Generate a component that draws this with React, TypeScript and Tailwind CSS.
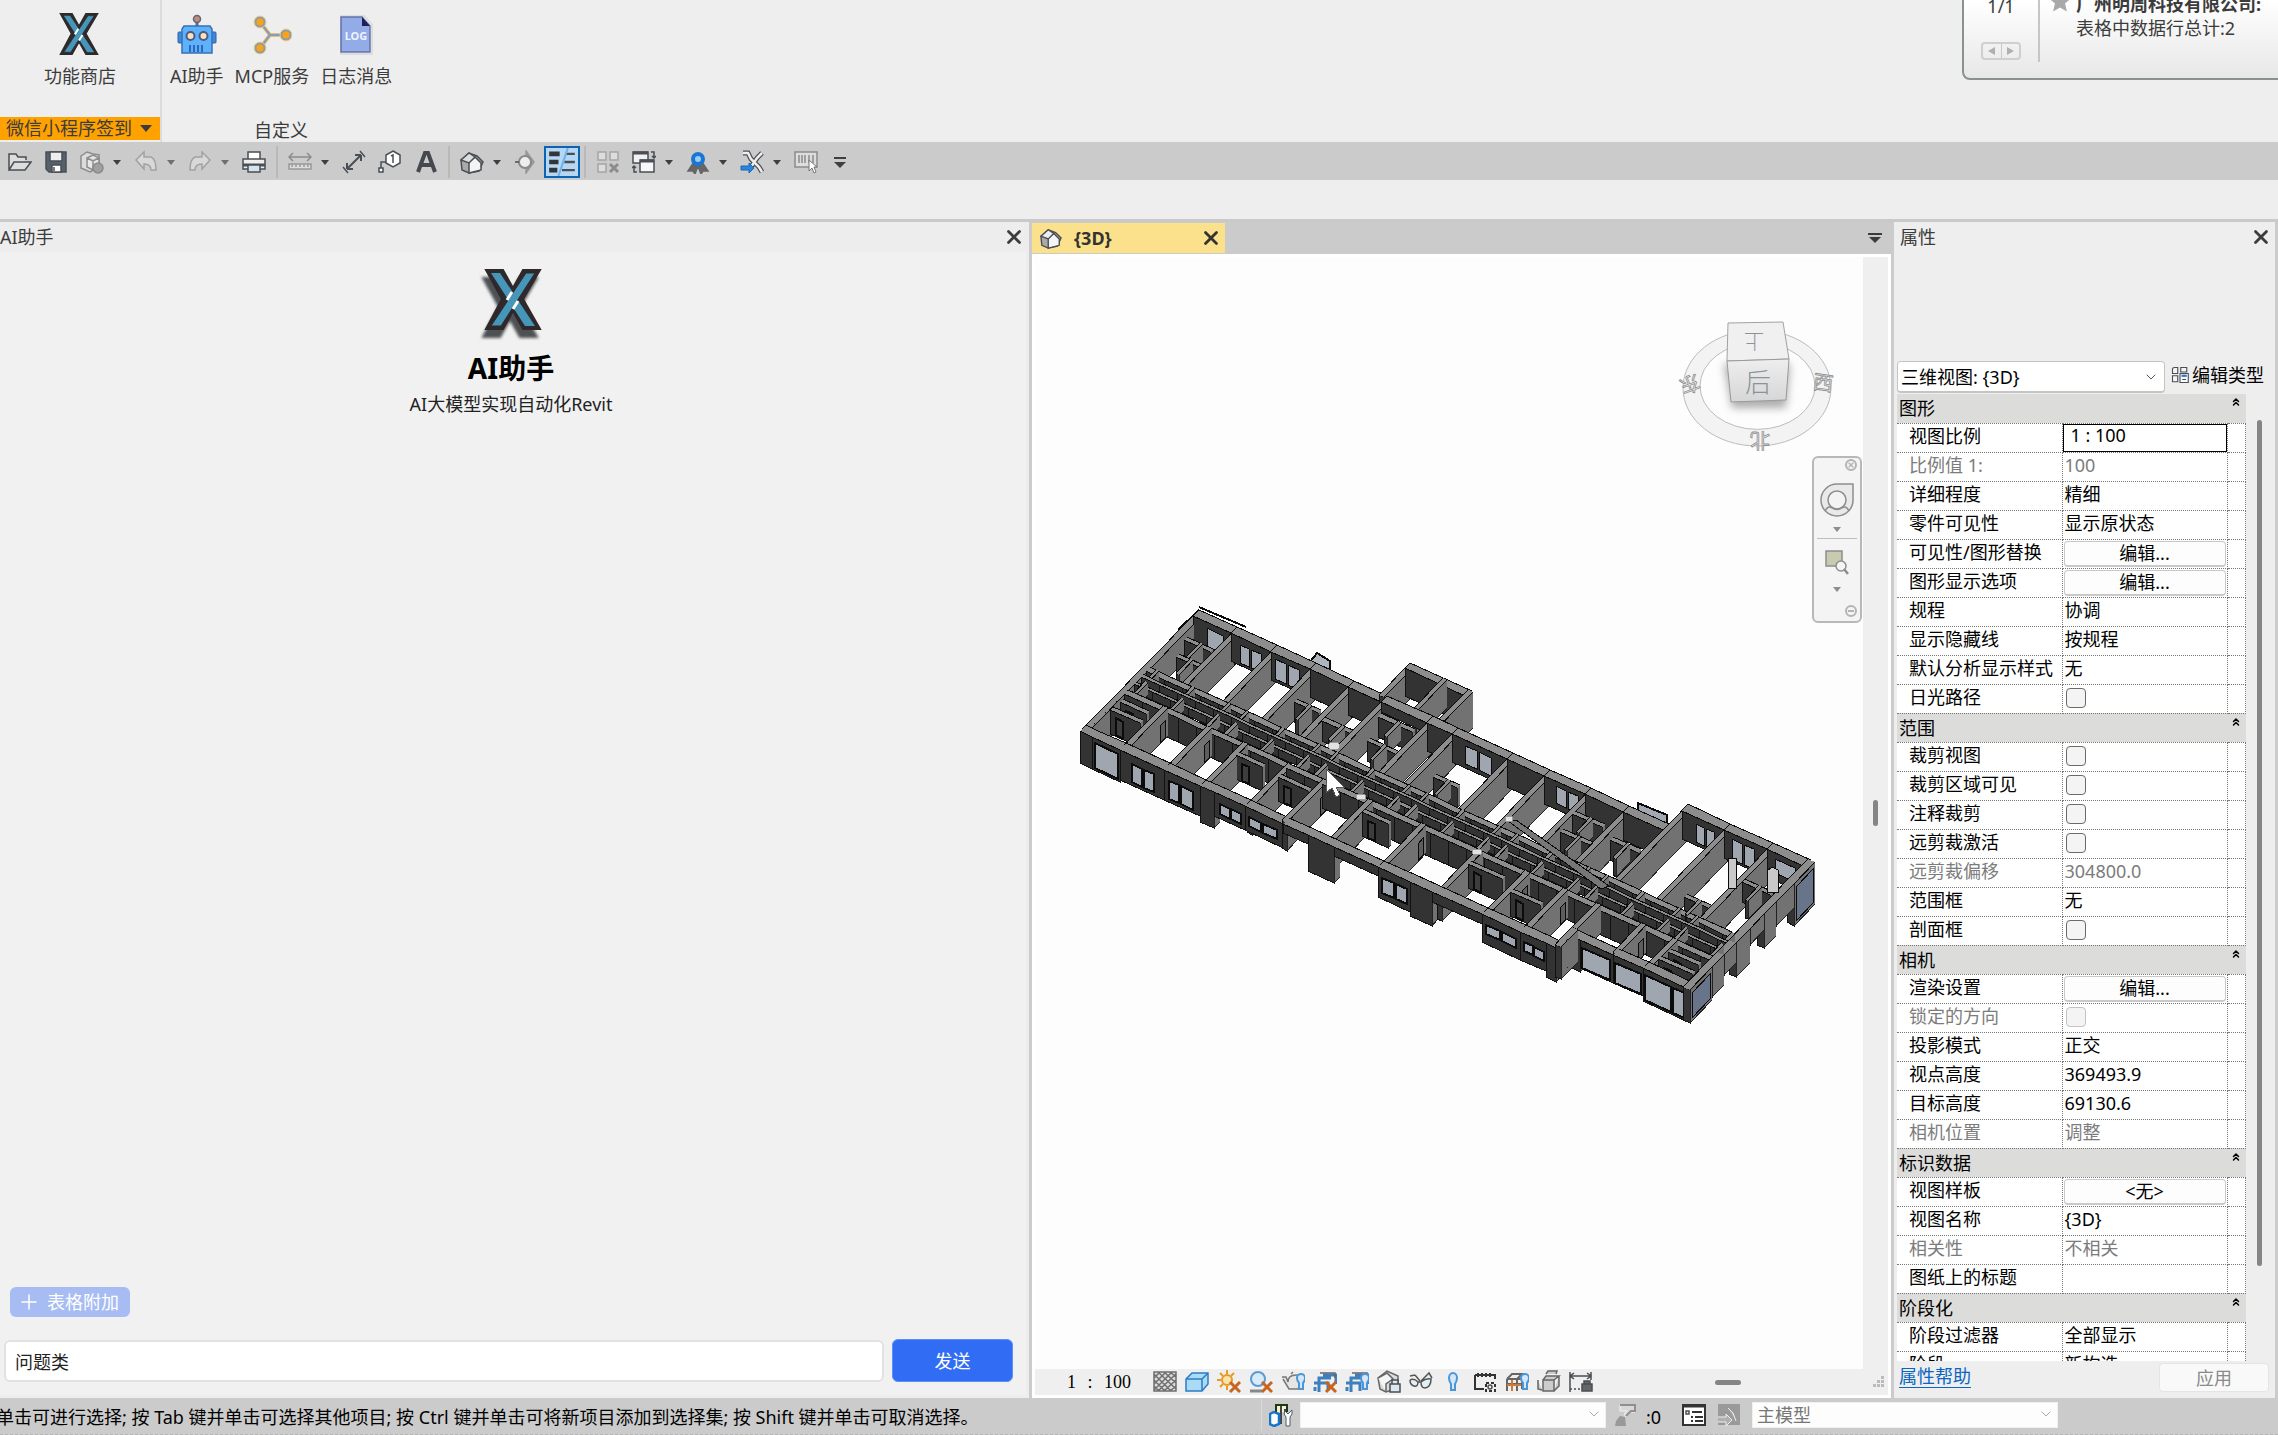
import type { ReactNode } from "react";
import { ChevronDown, ChevronsUp, Plus, X } from "lucide-react";

const FONT = "font-['Noto_Sans','Noto_Sans_CJK_SC',sans-serif]";

/* ---------- shared bits ---------- */

function Icon({ children, className = "h-6 w-6" }: { children: ReactNode; className?: string }) {
  return (
    <svg viewBox="0 0 24 24" className={className} fill="none" stroke="#4a4f55" strokeWidth="1.5" aria-hidden>
      {children}
    </svg>
  );
}

function Caret({ color = "#3c4043" }: { color?: string }) {
  return (
    <svg viewBox="0 0 8 5" className="h-[5px] w-2" aria-hidden>
      <path d="M0 0h8L4 5z" fill={color} />
    </svg>
  );
}

function LogoX({ className, shadow }: { className: string; shadow?: boolean }) {
  const outline = "M2 2H19L29 20 39 2H56L39 31 56 61H39L29 43 19 61H2L18 31Z";
  return (
    <svg viewBox={shadow ? "-5 0 64 74" : "0 0 58 63"} className={className} aria-hidden>
      {shadow && (
        <>
          <filter id="soft" x="-20%" y="-20%" width="140%" height="140%">
            <feGaussianBlur stdDeviation="1.5" />
          </filter>
          <path d={outline} fill="#4d5152" stroke="#4d5152" strokeWidth="2" transform="translate(-3 8)" filter="url(#soft)" />
        </>
      )}
      <path d={outline} fill="#2f292c" stroke="#2f292c" strokeWidth="2" />
      <path d="M7 5H16L51 58H41Z" fill="#4596b8" />
      <path d="M42 5H51L17 58H7Z" fill="#4596b8" stroke="#2f292c" strokeWidth="1" />
      <path d="M28 24 23 32M34 33 29 41" stroke="#fff" strokeWidth="3" />
    </svg>
  );
}

/* ---------- ribbon ---------- */

function RobotIcon() {
  return (
    <svg viewBox="0 0 40 42" className="h-[42px] w-10" aria-hidden>
      <path d="M20 8v5" stroke="#5b6b8c" strokeWidth="3" />
      <circle cx="20" cy="5" r="3.5" fill="#c98b6b" stroke="#56678a" strokeWidth="1.5" />
      <rect x="1" y="18" width="5" height="11" rx="1" fill="#3c8ae0" stroke="#3a5f9c" />
      <rect x="34" y="18" width="5" height="11" rx="1" fill="#3c8ae0" stroke="#3a5f9c" />
      <path d="M7 12h26l2 3v24H5V15z" fill="#5cb3fb" stroke="#3a6fb5" strokeWidth="1.5" />
      <circle cx="13.500" cy="22" r="4" fill="#fbe1b6" stroke="#4b5a86" strokeWidth="2" />
      <circle cx="26.500" cy="22" r="4" fill="#fbe1b6" stroke="#4b5a86" strokeWidth="2" />
      <path d="M13 31v7M17 31v7M21 31v7M25 31v7" stroke="#2f68b8" strokeWidth="2" />
    </svg>
  );
}

function McpIcon() {
  return (
    <svg viewBox="0 0 40 42" className="h-[42px] w-10" aria-hidden>
      <path d="M8 8 18 21H33M18 21 8 34" fill="none" stroke="#f0cf7a" strokeWidth="4" />
      <path d="M8 8 18 21H33M18 21 8 34" fill="none" stroke="#8f9cb0" strokeWidth="2.500" />
      {[[8, 8], [34, 21], [8, 34]].map(([cx, cy]) => (
        <g key={cy}>
          <circle cx={cx} cy={cy} r="6" fill="#8f9cb0" stroke="#f0cf7a" />
          <circle cx={cx} cy={cy} r="3.500" fill="#fca311" />
        </g>
      ))}
    </svg>
  );
}

function LogIcon() {
  return (
    <svg viewBox="0 0 40 42" className="h-[42px] w-10" aria-hidden>
      <path d="M5 2h23l8 9v29H5z" fill="#fff" stroke="#ddd" strokeWidth="2" />
      <path d="M5 3h21l8 9v26H5z" fill="#93abe6" stroke="#6673a8" strokeWidth="1.500" />
      <path d="M26 3l8 9h-8z" fill="#1e1f56" />
      <text x="20" y="26" textAnchor="middle" fontSize="11" fontWeight="700" fill="#eef3ff" fontFamily="Noto Sans">
        LOG
      </text>
    </svg>
  );
}

function RibbonButton({ label, children }: { label: string; children: ReactNode }) {
  return (
    <button type="button" className="flex flex-col items-center gap-2 whitespace-nowrap">
      {children}
      <span className="leading-6">{label}</span>
    </button>
  );
}

function Notice() {
  return (
    <aside className="ml-auto flex h-20 w-[316px] shrink-0 overflow-hidden rounded-bl-lg border-b-2 border-l-2 border-[#8b9090] bg-gradient-to-b from-white to-[#e7e7e7]">
      <div className="flex w-[74px] flex-col items-center justify-between pb-[18px]">
        <span className="-mt-1.5 leading-6">1/1</span>
        <div className="flex h-[18px] w-10 divide-x divide-[#c8c8c8] rounded-sm border-2 border-[#cfcfcf]">
          <button type="button" aria-label="上一条" className="flex flex-1 items-center justify-center">
            <svg viewBox="0 0 7 8" className="h-2 w-[7px]"><path d="M7 0v8L0 4z" fill="#b0b0b0" /></svg>
          </button>
          <button type="button" aria-label="下一条" className="flex flex-1 items-center justify-center">
            <svg viewBox="0 0 7 8" className="h-2 w-[7px]"><path d="M0 0v8l7-4z" fill="#b0b0b0" /></svg>
          </button>
        </div>
      </div>
      <div className="h-[62px] w-0.5 bg-[#c6c6c6]" />
      <svg viewBox="0 0 24 24" className="-mt-2.5 ml-2 h-[22px] w-6 shrink-0" aria-hidden>
        <path d="M12 0l3.500 8.500 8.500.6-6.500 5.700 2 8.700L12 19l-7.500 4.500 2-8.700L0 9.100l8.500-.6z" fill="#a9a9a9" />
      </svg>
      <div className="-mt-2 ml-1 whitespace-nowrap leading-6">
        <p className="font-bold">广州明周科技有限公司:</p>
        <p>表格中数据行总计:2</p>
      </div>
    </aside>
  );
}

function Ribbon() {
  return (
    <header className="flex h-[142px] shrink-0 overflow-hidden bg-[#eee]">
      <div className="flex w-[162px] shrink-0 flex-col items-center justify-between border-r-2 border-[#dcdcdc] pt-3">
        <RibbonButton label="功能商店">
          <LogoX className="mr-0.5 h-[44px] w-10" />
        </RibbonButton>
        <button type="button" className="mb-0.5 flex h-[23px] w-full items-center gap-2 bg-[#ffa200] pl-1.5 leading-[23px]">
          微信小程序签到
          <svg viewBox="0 0 12 7" className="h-[7px] w-3" aria-hidden><path d="M0 0h12L6 7z" fill="#3c3c3c" /></svg>
        </button>
      </div>
      <div className="flex flex-col items-center justify-between px-2 pt-[14px]">
        <div className="flex gap-[11px]">
          <RibbonButton label="AI助手"><RobotIcon /></RibbonButton>
          <RibbonButton label="MCP服务"><McpIcon /></RibbonButton>
          <RibbonButton label="日志消息"><LogIcon /></RibbonButton>
        </div>
        <span className="leading-6">自定义</span>
      </div>
      <Notice />
    </header>
  );
}

/* ---------- quick access toolbar ---------- */

type Tool = { name: string; icon?: ReactNode; menu?: boolean; dim?: boolean; on?: boolean; sep?: boolean };

const TOOLS: Tool[] = [
  { name: "打开", icon: <Icon><path d="M1 20V4h7l2 3h8v3M1 20l5-8h17l-6 8z" fill="#ddd" /></Icon> },
  { name: "保存", icon: <Icon><path d="M2 2h20v20H5l-3-3z" fill="#56616b" /><path d="M6 2h12v9H6z" fill="#eee" /><path d="M8 15h9v7H8z" fill="#fff" /><path d="M10 17v4" /></Icon> },
  { name: "同步", menu: true, icon: <Icon><path d="M1 6l6-4 6 2 6 1v12l-9 5-9-4z" fill="#dcdcdc" stroke="#8c8c8c" /><path d="M7 8l6-3 6 3v9l-6 3-6-3zM7 8l6 3 6-3M13 11v9" fill="#e8e8e8" stroke="#8c8c8c" /><circle cx="18" cy="18" r="5" fill="#a0a0a0" stroke="#8a8a8a" /></Icon> },
  { name: "放弃", menu: true, dim: true, icon: <Icon><path d="M2 10l8-8v5h7q5 2 5 13h-5q0-6-7-6v5z" fill="#d8d8d8" stroke="#a2a2a2" /></Icon> },
  { name: "重做", menu: true, dim: true, icon: <Icon><path d="M22 10l-8-8v5H7q-5 2-5 13h5q0-6 7-6v5z" fill="#d8d8d8" stroke="#a2a2a2" /></Icon> },
  { name: "打印", icon: <Icon><path d="M6 9V2h12v7" fill="#fff" /><path d="M1 9h22v10H1z" fill="#eee" /><path d="M1 15h22" strokeWidth="3" /><path d="M6 15h12v7H6z" fill="#d5e4ec" /></Icon> },
  { name: "", sep: true },
  { name: "测量", menu: true, icon: <Icon><path d="M1 7h22M5 3L1 7l4 4M19 3l4 4-4 4" stroke="#8c8c8c" /><path d="M1 14h22v5H1zM4 14v3M8 14v3M12 14v3M16 14v3M20 14v3" stroke="#999" fill="#ddd" /></Icon> },
  { name: "对齐尺寸标注", icon: <Icon><path d="M5 19L19 5M19 5v6M19 5h-6M5 19v-6M5 19h6" strokeWidth="2" /><path d="M1 17l5 6M18 1l5 6" /></Icon> },
  { name: "按类别标记", icon: <Icon><path d="M3 18v-6h6" /><path d="M1 18h4v4H1z" fill="#fff" /><path d="M15 1l7 4v8l-7 4-7-4V5z" fill="#fff" /><path d="M13 6l2-1v8" /></Icon> },
  { name: "文字", icon: <Icon><path d="M4 22L11 3h3l7 19M8 15h9" strokeWidth="4" stroke="#45494d" /></Icon> },
  { name: "", sep: true },
  { name: "默认三维视图", menu: true, icon: <Icon><path d="M1 10l8-7 8 3 6 6-4 9-10 2-7-3z" fill="#aaa" /><path d="M9 23V12l6-5 6 6v7z" fill="#f4f4f4" /><path d="M1 10l8-7 6 4-6 6z" fill="#ddd" /></Icon> },
  { name: "剖面", icon: <Icon><path d="M12 1l8 11-8 11z" fill="#999" stroke="#999" /><circle cx="11" cy="12" r="6" fill="#eee" stroke="#8a8a8a" strokeWidth="2" /><path d="M1 12h4" /></Icon> },
  { name: "细线", on: true, icon: <Icon className="h-7 w-7"><path d="M1 5h9M1 12h8M1 19h7" stroke="#30353a" strokeWidth="4" /><path d="M15 5h8M14 12h9M12 19h11" strokeWidth="2" /><path d="M17 0L9 24" stroke="#6fb0f0" strokeWidth="1.800" /></Icon> },
  { name: "", sep: true },
  { name: "关闭非活动视图", dim: true, icon: <Icon><path d="M2 2h8v8H2zM14 2h8v8h-8zM2 14h8v8H2z" fill="#ddd" stroke="#a5a5a5" /><path d="M14 14l8 8M22 14l-8 8" stroke="#8c8c8c" strokeWidth="3" /></Icon> },
  { name: "切换窗口", menu: true, icon: <Icon><path d="M1 2h15v11H1z" fill="#f1f1f1" /><path d="M8 10h14v12H8z" fill="#f7f7f7" /><path d="M1 3h15M8 11h14" strokeWidth="3" /><path d="M19 2h3v6M20 6l2 2 2-2M5 22H2v-6M0 18l2-2 2 2" /></Icon> },
  { name: "徽章", menu: true, icon: <Icon><path d="M8 12l-6 9h5l2 3 3-8 3 8 2-3h5l-6-9z" fill="#666" stroke="#666" /><circle cx="12" cy="9" r="5" fill="#9accf7" stroke="#1a76d2" strokeWidth="4" /></Icon> },
  { name: "工具", menu: true, icon: <Icon><path d="M3 3l5 0 3 6 8 8 3 5M22 3l-5 5-6 9" strokeWidth="5" /><path d="M3 3l5 0 3 6 8 8 3 5M22 3l-5 5-6 9" stroke="#eee" strokeWidth="2.500" /><path d="M1 16h8v-3l5 5-5 5v-3H1z" fill="#2787e0" stroke="#1c66b0" strokeWidth="1" /></Icon> },
  { name: "修改", icon: <Icon><path d="M1 2h22v15H1z" fill="#ddd" stroke="#8c8c8c" /><path d="M5 5v8M8 5v8M11 5v8M15 5v8M19 5v8" stroke="#8c8c8c" /><path d="M15 10v11l3-3 2 5 2-1-2-5h3z" fill="#fff" stroke="#777" strokeWidth="1" /></Icon> },
];

function QuickToolbar() {
  return (
    <nav aria-label="快速访问工具栏" className="flex h-[38px] shrink-0 items-center bg-[#cbcbcb] pl-0.5 pt-0.5">
      {TOOLS.map((t, i) =>
        t.sep ? (
          <span key={i} className="mx-1 h-8 w-0.5 bg-[#b9b9b9]" />
        ) : (
          <div key={i} className="flex items-center">
            <button
              type="button"
              aria-label={t.name}
              className={
                t.on
                  ? "flex h-8 w-9 items-center justify-center border-2 border-[#0a64b4] bg-[#b5d7f3]"
                  : "flex h-8 w-9 items-center justify-center"
              }
            >
              {t.icon}
            </button>
            {t.menu && (
              <span className="flex w-[18px] justify-center pr-1">
                <Caret color={t.dim ? "#6f6f6f" : undefined} />
              </span>
            )}
          </div>
        ),
      )}
      <button type="button" aria-label="自定义工具栏" className="ml-2.5 flex flex-col items-center gap-[3px]">
        <span className="h-0.5 w-3 bg-[#3c4043]" />
        <svg viewBox="0 0 12 6" className="h-1.5 w-3" aria-hidden><path d="M0 0h12L6 6z" fill="#3c4043" /></svg>
      </button>
    </nav>
  );
}

/* ---------- AI panel ---------- */

function AiPanel() {
  return (
    <section className="flex min-w-0 flex-[1029] flex-col bg-[#ededed] pb-[3px]">
      <div className="flex h-[30px] shrink-0 items-center justify-between pr-1 text-[#3c3c3c]">
        <h2>AI助手</h2>
        <button type="button" aria-label="关闭"><X className="h-[22px] w-[22px]" strokeWidth={3} /></button>
      </div>
      <div className="mr-[3px] flex flex-1 flex-col bg-[#f1f1f1]">
        <div className="flex flex-col items-center pt-4 pr-1">
          <LogoX className="h-[74px] w-16" shadow />
          <h1 className="mt-2 text-[28px] font-bold leading-9 text-black">AI助手</h1>
          <p className="mt-1.5 leading-6 text-[#222]">AI大模型实现自动化Revit</p>
        </div>
        <form className="mt-auto px-1 pb-[13px]" onSubmit={(e) => e.preventDefault()}>
          <button type="button" className="mb-[22px] ml-1.5 flex h-[30px] items-center gap-1.5 rounded-md bg-[#a7bcf3] px-[11px] leading-6 text-white">
            <Plus className="-ml-1 h-6 w-6" strokeWidth={1.5} />
            表格附加
          </button>
          <div className="flex items-center gap-2 pr-[9px]">
            <input
              aria-label="问题"
              defaultValue="问题类"
              className="h-[42px] min-w-0 flex-1 rounded-md border-2 border-[#e2e2e2] bg-white px-[9px] text-[#222] outline-none"
            />
            <button type="submit" className="h-[43px] w-[121px] rounded-md border border-[#5c8df8] bg-[#316df4] text-white">发送</button>
          </div>
        </form>
      </div>
    </section>
  );
}

/* ---------- building model ---------- */

// plan coordinates: a runs along the block, b across it, z is height below the wall head
const pt = (a: number, b: number, z = 0) => `${Math.round(1199 + a - b)},${Math.round(610 + a * 0.455 + b * 1.02 + z)}`;

type Pane = [number, number, number, number];
type Box = { a0: number; a1: number; b0: number; b1: number; h: number; inner?: boolean; front?: Pane[]; side?: Pane[] };

const BACK = [0, 38, 78, 117, 155, 188, 234, 259, 314, 351, 392, 430, 470, 512, 555, 593];
const FRONT = [0, 40, 84, 120, 165, 200, 245, 298, 355, 402, 440, 473, 518, 550, 593];

const boxes: Box[] = [];
const uWall = (a0: number, a1: number, b: number, t: number, h: number, extra: Partial<Box> = {}) =>
  boxes.push({ a0, a1, b0: b, b1: b + t, h, ...extra });
const vWall = (a: number, b0: number, b1: number, t: number, h: number, extra: Partial<Box> = {}) => {
  // cut long partitions so that the back-to-front order stays right
  for (let b = b0; b < b1; b += 11) {
    boxes.push({ a0: a, a1: a + t, b0: b, b1: Math.min(b + 11, b1), h, inner: b + 11 < b1, ...(b === b0 ? extra : {}) });
  }
};

const backWindows: Record<number, Pane[]> = {
  0: [[14, 30, 6, 24]],
  38: [[9, 18, 7, 25], [20, 30, 7, 25]],
  78: [[4, 15, 6, 26], [17, 28, 6, 26]],
  259: [[13, 25, 6, 24], [27, 39, 6, 24]],
  351: [[12, 22, 5, 22], [24, 34, 5, 22]],
  470: [[14, 22, 7, 25], [24, 32, 7, 25]],
  512: [[8, 18, 6, 26], [20, 30, 6, 26]],
  555: [[8, 28, 6, 20]],
};

BACK.slice(0, -1).forEach((a, i) => {
  const next = BACK[i + 1];
  const b = a >= 470 ? -19 : 0;
  const open = a === 188;
  uWall(a, next, b, 6, open ? 10 : 28, { front: backWindows[a] });
  vWall(a, b, 54, 5, 28, { side: i % 3 === 1 ? [[2, 8, 9, 27]] : undefined });
});

FRONT.slice(0, -1).forEach((a) => vWall(a, 76, a > 473 ? 104 : 117, 5, 28, { side: a % 2 ? undefined : [[3, 8, 10, 27]] }));

// stair block behind the north wall
uWall(182, 244, -29, 5, 28);
vWall(182, -29, 2, 5, 28);
vWall(215, -29, 2, 4, 28);
vWall(240, -29, 2, 5, 36);

// corridor walls and service beams
for (let a = 5; a < 590; a += 18) {
  const end = Math.min(a + 18, 590);
  uWall(a, end, 54, 4, a % 4 === 1 ? 20 : 26);
  uWall(a, end, 61, 2, 8);
  uWall(a, end, 68, 2, 8);
  uWall(a, end, 76, 4, a % 3 === 2 ? 24 : 18);
  if (a % 5 < 3) vWall(a + 6, 54, 76, 3, 12);
}

// inner rooms
[[10, 22, 26], [16, 36, 22], [128, 30, 24], [160, 34, 34], [196, 14, 34], [205, 34, 28], [275, 38, 24], [396, 20, 30], [400, 36, 30], [440, 26, 28], [560, 14, 28], [530, 42, 24]].forEach(
  ([a, b, len]) => {
    uWall(a, a + len, b, 3, 20);
    vWall(a + len / 2, b, b + 14, 3, 18);
  },
);
[[6, 92, 30], [8, 84, 26], [124, 84, 26], [168, 86, 30], [250, 84, 26], [358, 86, 34], [406, 92, 30], [556, 84, 30], [554, 92, 34]].forEach(([a, b, len]) => {
  uWall(a, a + len, b, 3, 24, { front: [[6, 13, 6, 23]] });
});

// south facade: segments differ in depth and glazing
const facade: [number, number, number, Pane[]?][] = [
  [0, 12, 32],
  [12, 40, 32, [[3, 26, 5, 30]]],
  [40, 84, 30, [[12, 22, 9, 27], [24, 34, 9, 27]]],
  [84, 120, 30, [[5, 15, 9, 27], [17, 29, 9, 27]]],
  [120, 134, 36],
  [134, 165, 24, [[6, 16, 9, 19], [17, 27, 9, 19]]],
  [165, 203, 24, [[4, 16, 9, 18], [18, 32, 9, 18]]],
  [203, 228, 9],
  [228, 254, 36],
  [254, 298, 9],
  [298, 330, 30, [[4, 16, 9, 24], [18, 29, 9, 24]]],
  [330, 352, 34],
  [352, 402, 10],
  [402, 440, 28, [[4, 18, 9, 18], [20, 34, 9, 18]]],
  [440, 466, 28, [[4, 13, 9, 18], [14, 24, 9, 18]]],
  [466, 476, 34],
];
facade.forEach(([a0, a1, h, front]) => uWall(a0, a1, 113, 6, h, { front }));
uWall(473, 487, 100, 6, 32);
uWall(487, 520, 100, 6, 28, { front: [[2, 30, 7, 27]] });
uWall(520, 550, 100, 6, 28, { front: [[2, 28, 7, 27]] });
uWall(550, 597, 100, 6, 33, { front: [[2, 28, 6, 31], [30, 44, 6, 31]] });

// gable ends
vWall(0, 0, 117, 6, 28);
([[-19, 2, 42], [2, 20, 24], [20, 32, 34], [32, 46, 16], [46, 60, 34], [60, 72, 20], [72, 84, 30], [84, 106, 33]] as const).forEach(([b0, b1, h]) =>
  boxes.push({ a0: 590, a1: 597, b0, b1, h, side: h === 42 || b0 >= 84 ? [[2, b1 - b0 - 2, 5, h - 3]] : undefined }),
);
vWall(473, 100, 117, 6, 32);

boxes.sort((p, q) => (p.a0 + p.a1) * 0.46 + (p.b0 + p.b1) * 1.02 - (q.a0 + q.a1) * 0.46 - (q.b0 + q.b1) * 1.02);

function Building() {
  return (
    <svg
      viewBox="1070 590 760 450"
      className="absolute left-[35px] top-[333px] h-[450px] w-[760px]"
      shapeRendering="crispEdges"
      stroke="#0b0b0b"
      strokeWidth="1"
      role="img"
      aria-label="三维模型"
    >
      <path d="M1199 610L1178 630M1199 607l47 20" fill="none" strokeWidth="2" />
      <path d="M1310 662l7-9 13 8v10" fill="#aeb5bd" strokeWidth="2" />
      <path d="M1638 803l29 12v14l-29-12z" fill="#a2a9b3" strokeWidth="2" />
      {boxes.map((w, i) => (
        <g key={i}>
          <polygon
            points={`${pt(w.a0, w.b1)} ${pt(w.a1, w.b1)} ${pt(w.a1, w.b1, w.h)} ${pt(w.a0, w.b1, w.h)}`}
            fill="#333"
            stroke={w.inner ? "none" : "#111"}
          />
          <polygon points={`${pt(w.a1, w.b0)} ${pt(w.a1, w.b1)} ${pt(w.a1, w.b1, w.h)} ${pt(w.a1, w.b0, w.h)}`} fill="#727272" stroke="none" />
          <path d={`M${pt(w.a1, w.b0, w.h)}L${pt(w.a1, w.b1, w.h)}${w.inner ? "" : `V${pt(w.a1, w.b1).split(",")[1]}`}`} fill="none" stroke="#222" />
          <polygon points={`${pt(w.a0, w.b0)} ${pt(w.a1, w.b0)} ${pt(w.a1, w.b1)} ${pt(w.a0, w.b1)}`} fill="#8d8d8d" stroke="none" />
          {w.a1 - w.a0 > w.b1 - w.b0 ? (
            <path d={`M${pt(w.a0, w.b0)}L${pt(w.a1, w.b0)}M${pt(w.a0, w.b1)}L${pt(w.a1, w.b1)}`} />
          ) : (
            <path d={`M${pt(w.a0, w.b0)}L${pt(w.a0, w.b1)}M${pt(w.a1, w.b0)}L${pt(w.a1, w.b1)}`} />
          )}
          {w.front?.map(([s, e, t, d], k) => (
            <polygon
              key={k}
              points={`${pt(w.a0 + s, w.b1, t)} ${pt(w.a0 + e, w.b1, t)} ${pt(w.a0 + e, w.b1, d)} ${pt(w.a0 + s, w.b1, d)}`}
              fill={w.h === 24 && w.b1 - w.b0 === 3 ? "#3d3d3d" : "#a0a6af"}
              strokeWidth={w.b0 < 10 ? 1 : 2}
            />
          ))}
          {w.side?.map(([s, e, t, d], k) => (
            <polygon
              key={k}
              points={`${pt(w.a1, w.b0 + s, t)} ${pt(w.a1, w.b0 + e, t)} ${pt(w.a1, w.b0 + e, d)} ${pt(w.a1, w.b0 + s, d)}`}
              fill={w.h > 32 ? "#67748a" : "#5d5d5d"}
            />
          ))}
        </g>
      ))}
      <path d="M1508 821l8-1 93 66-8 3z" fill="#777" />
      <g fill="#e2e2e2" stroke="#999">
        <ellipse cx="1334" cy="746" rx="6" ry="4" />
        <ellipse cx="1361" cy="797" rx="5" ry="3" />
        <ellipse cx="1477" cy="852" rx="5" ry="3" />
        <ellipse cx="1509" cy="819" rx="4" ry="3" />
      </g>
      <path d="M1728 858h8v30h-8zM1767 871l5-4 6 3v22h-11z" fill="#c9c9c9" />
      <path d="M1326 769v24l6-5 4 9 4-2-4-8h8z" fill="#fff" stroke="#555" />
    </svg>
  );
}

function ViewCube() {
  return (
    <svg viewBox="1675 315 165 140" className="absolute right-[23px] top-[58px] h-[140px] w-[165px]" aria-label="视图导航">
      <defs>
        <linearGradient id="cube" x1="0" y1="0" x2="0" y2="1">
          <stop offset="0" stopColor="#eee" />
          <stop offset="1" stopColor="#d6d6d6" />
        </linearGradient>
        <filter id="cubeShade" x="-30%" y="-30%" width="160%" height="160%">
          <feGaussianBlur stdDeviation="4" />
        </filter>
      </defs>
      <path
        d="M1683 388a74 58 0 1 0 148 0a74 58 0 1 0-148 0M1700 386a57 43 0 1 1 115 0a57 43 0 1 1-115 0"
        fill="#f3f3f3"
        fillRule="evenodd"
        stroke="#bcbcbc"
      />
      <path d="M1724 364h66l-4 44h-54z" fill="#8a8a8a" filter="url(#cubeShade)" opacity=".7" />
      <path d="M1728 323l55-1 6 37-62 2z" fill="#f0f0f0" stroke="#a2a2a2" />
      <path d="M1727 361l62-2-3 41-55 2z" fill="url(#cube)" stroke="#9a9a9a" />
      <g fontFamily="Noto Sans CJK SC" textAnchor="middle" fill="#8d9299" fontWeight="300">
        <text x="1754" y="350" fontSize="20" transform="rotate(180 1754 342)">上</text>
        <text x="1758" y="392" fontSize="26">后</text>
      </g>
      <g fontFamily="Noto Sans CJK SC" textAnchor="middle" fontSize="20" fill="#f3f3f3" stroke="#8e8e8e" strokeWidth=".8">
        <text x="1690" y="393" transform="rotate(160 1690 385)">东</text>
        <text x="1823" y="390" transform="rotate(8 1823 384)">西</text>
        <text x="1760" y="447" transform="rotate(180 1760 440)">北</text>
      </g>
    </svg>
  );
}

function NavBar() {
  return (
    <div className="absolute right-px top-[199px] flex h-[167px] w-[50px] flex-col items-center rounded-md border-2 border-[#b8b8b8] bg-[#f4f4f4] pb-0.5">
      <button type="button" aria-label="关闭导航栏" className="mr-[3px] mt-px flex h-3 w-3 items-center justify-center self-end rounded-full border-2 border-[#b4b4b4] text-[#b4b4b4]">
        <X className="h-2 w-2" strokeWidth={4} />
      </button>
      <button type="button" aria-label="控制盘" className="mt-3">
        <svg viewBox="0 0 34 34" className="h-[34px] w-[34px]" fill="none" stroke="#8d8d8d" strokeWidth="1.500">
          <path d="M17 1h16v16a16 16 0 1 1-16-16z" fill="#e9e9e9" />
          <circle cx="17" cy="17" r="9" fill="#f3f3f3" />
          <path d="M5 28q3-6 7-3M29 28q-3-6-7-3M11 24q6 5 12 0" />
        </svg>
      </button>
      <span className="mt-2.5"><Caret color="#8d8d8d" /></span>
      <span className="mt-1.5 h-px w-10 bg-[#bdbdbd]" />
      <button type="button" aria-label="区域放大" className="mt-2.5">
        <svg viewBox="0 0 26 26" className="h-[26px] w-[26px]" fill="none" stroke="#8d8d8d" strokeWidth="1.500">
          <path d="M2 2h16v15H2z" fill="#c9cbb1" />
          <circle cx="17" cy="17" r="5" fill="#f5f5f5" />
          <path d="M20 20l4 5" strokeWidth="2.500" />
        </svg>
      </button>
      <span className="mt-3"><Caret color="#8d8d8d" /></span>
      <span className="mb-0.5 mr-[3px] mt-auto flex h-3 w-3 items-center justify-center self-end rounded-full border-2 border-[#b4b4b4]">
        <span className="h-0.5 w-1.5 bg-[#b4b4b4]" />
      </span>
    </div>
  );
}

const bulb = <path d="M16 8a4 4 0 0 1 8 0q0 3-2 5v6h-4v-6q-2-2-2-5z" fill="#d3e9fb" stroke="#4d96d6" strokeWidth="2" />;
const cross = <path d="M13 12l10 10M23 12L13 22" stroke="#c8641e" strokeWidth="3" />;
const crop = (
  <g>
    <path d="M2 21v-4M6 22V8h12M1 13h14v8M10 5h13v9" stroke="#3f7fbc" strokeWidth="3" />
    <path d="M7 3h15v5" stroke="#666" />
  </g>
);

const VIEW_TOOLS: [string, ReactNode][] = [
  ["详细程度", <path key="a" d="M1 2h22v19H1zM1 8l6-6M1 14L13 2M1 20L19 2M5 21L23 4M11 21l12-11M17 21l6-5M1 16l5 5M1 10l11 11M1 4l17 17M5 2l18 17M11 2l12 11M17 2l6 5" stroke="#6f6f6f" fill="#ddd" />],
  ["视觉样式", <path key="a" d="M1 9l6-6h16v11l-6 7H1zM1 9h16v12M17 9l6-6" fill="#a9daf6" stroke="#2e7ec4" />],
  ["日光路径", <g key="a"><circle cx="10" cy="10" r="5" fill="#fbe2a8" stroke="#e79a27" strokeWidth="2" /><path d="M10 0v4M0 10h4M3 3l3 3M17 3l-3 3M3 17l3-3M10 16v4" stroke="#e79a27" strokeWidth="2" />{cross}</g>],
  ["阴影", <g key="a"><circle cx="9" cy="9" r="7" fill="#d8ebfa" stroke="#5b9bd5" strokeWidth="2" /><path d="M1 21h12" strokeWidth="3" stroke="#888" />{cross}</g>],
  ["渲染", <g key="a"><path d="M1 7h4l2 5q0-7 8-7t5 7l-3 7H8L2 9M10 4l2-2" fill="#e5e5e5" stroke="#777" />{bulb}</g>],
  ["裁剪视图", <g key="a">{crop}{cross}</g>],
  ["裁剪区域", <g key="a">{crop}{bulb}</g>],
  ["锁定视图", <g key="a"><path d="M1 8l9-7 11 5v12l-12 4-6-3z" fill="#ddd" stroke="#666" /><path d="M1 8l9-5 6 6-7 5v7" fill="#f5f5f5" stroke="#666" /><path d="M13 14h10v8H13zM15 14v-4h6v4" fill="#dbe8f0" /></g>],
  ["临时隐藏", <path key="a" d="M1 6l5-1M12 11L20 3l3 5M6 5l5 6M1 10q4-2 8 2q0 5-4 4q-4-1-4-6M12 12q5-4 10-3q0 8-6 9q-4 0-4-6M9 12l3 0" stroke="#555" fill="#e3eff7" />],
  ["显示隐藏图元", <path key="a" d="M8 8a4 5 0 0 1 8 0q0 3-2 6v6h-4v-6q-2-3-2-6z" fill="#d3e9fb" stroke="#4d96d6" strokeWidth="2" />],
  ["临时视图属性", <g key="a"><path d="M2 5h20v4M2 5v14h9M5 3v4M9 3v4M13 3v4M17 3v4" strokeWidth="2" stroke="#333" /><path d="M13 13h9v8h-9z" strokeDasharray="3 2" strokeWidth="2" stroke="#333" /><circle cx="17" cy="17" r="2" /></g>],
  ["分析模型", <g key="a"><path d="M2 9l5-5h12v15M2 9v12M7 9v12M12 9v12M17 9v10M2 9h14M2 14h14M12 9l5-5" stroke="#666" strokeWidth="2" /><path d="M2 15h14M7 10v11" stroke="#cc7a3a" strokeWidth="2" />{bulb}</g>],
  ["位移集", <path key="a" d="M6 10h11v11H6zM6 10l3-4h13l-5 4M22 6v10l-5 5M1 10v9l4 1M9 4l2-3h9l-1 3" fill="#ccc" stroke="#666" />],
  ["约束", <g key="a"><path d="M1 2v20M22 2v8M1 6h21M5 3L1 6l4 3M18 3l4 3-4 3" /><path d="M1 19h10" strokeDasharray="2 2" /><path d="M13 14h10v7H13zM15 14v-3h6v3" fill="#666" /></g>],
];

function ModelView() {
  return (
    <section className="flex min-w-0 flex-[859] flex-col border-l-[3px] border-r-[3px] border-[#cbcbcb] bg-[#cbcbcb]">
      <div className="flex h-8 shrink-0 items-center justify-between pr-[9px]">
        <div className="flex h-[30px] w-[193px] items-center gap-3 bg-[#fbe18c] pl-2 pr-[3px] text-[#333]">
          <Icon className="h-[22px] w-[22px]"><path d="M1 10l8-7 8 3 6 6-4 9-10 2-7-3z" fill="#aaa" /><path d="M9 23V12l6-5 6 6v7z" fill="#f4f4f4" /><path d="M1 10l8-7 6 4-6 6z" fill="#eee" /></Icon>
          <span className="font-bold">{"{3D}"}</span>
          <button type="button" aria-label="关闭视图" className="ml-auto"><X className="h-[22px] w-[22px]" strokeWidth={3} /></button>
        </div>
        <button type="button" aria-label="视图列表" className="flex flex-col items-center gap-0.5">
          <span className="h-0.5 w-3.5 bg-[#3c3c3c]" />
          <svg viewBox="0 0 12 6" className="h-1.5 w-3" aria-hidden><path d="M0 0h12L6 6z" fill="#3c3c3c" /></svg>
        </button>
      </div>
      <div className="flex flex-1 flex-col border-[3px] border-white">
        <div className="flex flex-1">
          <div className="relative flex-1 overflow-hidden bg-[#fdfdfd]">
            <Building />
            <ViewCube />
            <NavBar />
          </div>
          <div className="flex w-[25px] items-center justify-center bg-[#efefef]">
            <span className="h-[26px] w-[5px] rounded-full bg-[#858585]" />
          </div>
        </div>
        <div className="flex h-[26px] shrink-0 items-center bg-[#efefef] pl-[32px]">
          <button type="button" aria-label="视图比例" className="mr-[22px] flex w-[64px] justify-between font-['Liberation_Serif',serif] text-black">
            <span>1</span><span>:</span><span>100</span>
          </button>
          <div className="flex gap-2">
            {VIEW_TOOLS.map(([name, art]) => (
              <button key={name} type="button" aria-label={name}><Icon>{art}</Icon></button>
            ))}
          </div>
          <span className="ml-[122px] h-[5px] w-[26px] rounded-full bg-[#858585]" />
          <svg viewBox="0 0 12 12" className="ml-auto mr-[3px] h-3 w-3" aria-hidden>
            <path d="M8 0h3v3H8zM8 4h3v3H8zM4 4h3v3H4zM8 8h3v3H8zM4 8h3v3H4zM0 8h3v3H0z" fill="#bbb" />
          </svg>
        </div>
      </div>
    </section>
  );
}

/* ---------- properties ---------- */

type Row = { label: string; value?: string; kind?: "check" | "button" | "input"; off?: boolean };

const GROUPS: { title: string; rows: Row[] }[] = [
  {
    title: "图形",
    rows: [
      { label: "视图比例", value: "1 : 100", kind: "input" },
      { label: "比例值 1:", value: "100", off: true },
      { label: "详细程度", value: "精细" },
      { label: "零件可见性", value: "显示原状态" },
      { label: "可见性/图形替换", value: "编辑...", kind: "button" },
      { label: "图形显示选项", value: "编辑...", kind: "button" },
      { label: "规程", value: "协调" },
      { label: "显示隐藏线", value: "按规程" },
      { label: "默认分析显示样式", value: "无" },
      { label: "日光路径", kind: "check" },
    ],
  },
  {
    title: "范围",
    rows: [
      { label: "裁剪视图", kind: "check" },
      { label: "裁剪区域可见", kind: "check" },
      { label: "注释裁剪", kind: "check" },
      { label: "远剪裁激活", kind: "check" },
      { label: "远剪裁偏移", value: "304800.0", off: true },
      { label: "范围框", value: "无" },
      { label: "剖面框", kind: "check" },
    ],
  },
  {
    title: "相机",
    rows: [
      { label: "渲染设置", value: "编辑...", kind: "button" },
      { label: "锁定的方向", kind: "check", off: true },
      { label: "投影模式", value: "正交" },
      { label: "视点高度", value: "369493.9" },
      { label: "目标高度", value: "69130.6" },
      { label: "相机位置", value: "调整", off: true },
    ],
  },
  {
    title: "标识数据",
    rows: [
      { label: "视图样板", value: "<无>", kind: "button" },
      { label: "视图名称", value: "{3D}" },
      { label: "相关性", value: "不相关", off: true },
      { label: "图纸上的标题", value: "" },
    ],
  },
  {
    title: "阶段化",
    rows: [
      { label: "阶段过滤器", value: "全部显示" },
      { label: "阶段", value: "新构造" },
    ],
  },
];

function PropValue({ row }: { row: Row }) {
  if (row.kind === "input")
    return <input id={row.label} defaultValue={row.value} className="block h-7 w-full border border-black bg-white px-[7px] pb-1.5 outline-none" />;
  if (row.kind === "button")
    return (
      <button id={row.label} type="button" className="ml-px block h-[26px] w-[162px] rounded border border-b-2 border-[#c9c9c9] bg-[#fdfdfd] leading-[22px]">
        {row.value}
      </button>
    );
  if (row.kind === "check")
    return (
      <input
        id={row.label}
        type="checkbox"
        disabled={row.off}
        className="mb-0.5 ml-[3px] block h-5 w-5 appearance-none rounded border border-[#6a6a6a] bg-[#f4f4f4] disabled:border-[#c4c4c4]"
      />
    );
  return <span className="block pb-1 pl-0.5 leading-6">{row.value}</span>;
}

function PropertiesPanel() {
  return (
    <section className="flex w-[384px] shrink-0 flex-col border-r-[3px] border-[#cbcbcb] bg-[#eee]">
      <div className="flex h-[30px] shrink-0 items-center justify-between pl-1.5 pr-[3px] text-[#3c3c3c]">
        <h2>属性</h2>
        <button type="button" aria-label="关闭属性"><X className="h-[22px] w-[22px]" strokeWidth={3} /></button>
      </div>
      <div className="mt-[109px] flex h-8 shrink-0 items-center gap-1.5 pl-[3px]">
        <div className="relative w-[268px]">
          <select aria-label="类型选择" className="h-8 w-full appearance-none rounded-sm border border-b-2 border-[#c4c4c4] bg-white px-[3px] text-black">
            <option>{"三维视图: {3D}"}</option>
          </select>
          <ChevronDown className="pointer-events-none absolute right-1.5 top-2 h-4 w-4 text-[#555]" strokeWidth={1.5} />
        </div>
        <button type="button" className="flex items-center gap-[3px] whitespace-nowrap pb-1 text-black">
          <Icon className="h-[18px] w-[18px]"><path d="M2 4q0-2 3-2h4v8H2zM13 2h8v6h-8zM2 13h7v8H2z" fill="#f4f4f4" /><path d="M12 10h11v12H12z" fill="#fff" /><path d="M14 13h7" stroke="#2f78c4" strokeWidth="3" /><path d="M15 18h5" /></Icon>
          编辑类型
        </button>
      </div>
      <div className="mt-px flex min-h-0 flex-1 basis-0 overflow-hidden pl-[3px]">
        <table className="h-fit w-[349px] table-fixed border-collapse bg-white text-black">
          <colgroup>
            <col className="w-[165px]" />
            <col className="w-[165px]" />
            <col />
          </colgroup>
          {GROUPS.map((g) => (
            <tbody key={g.title}>
              <tr className="h-[29px] bg-[#dcdcda]">
                <th colSpan={3} className="p-0 text-left font-normal">
                  <span className="flex h-7 items-center justify-between pl-0.5 pr-1 leading-7">
                    {g.title}
                    <ChevronsUp className="mb-3 h-3 w-3" strokeWidth={3} />
                  </span>
                </th>
              </tr>
              {g.rows.map((r) => (
                <tr key={r.label} className={r.off ? "h-[29px] text-[#7c7c7c]" : "h-[29px]"}>
                  <td className="whitespace-nowrap border border-l-0 border-dotted border-[#777] p-0 pl-3">
                    <label htmlFor={r.kind ? r.label : undefined} className="block pb-1 leading-6">{r.label}</label>
                  </td>
                  <td className="border border-dotted border-[#777] p-0"><PropValue row={r} /></td>
                  <td className="border border-dotted border-[#777] p-0" />
                </tr>
              ))}
            </tbody>
          ))}
        </table>
        <span className="ml-[11px] mt-[26px] h-[846px] w-[5px] rounded-full bg-[#858585]" />
      </div>
      <div className="flex h-[37px] shrink-0 items-center justify-between pb-1 pl-[5px] pr-1.5">
        <a href="#help" className="mb-1 text-[#0a66c2] underline underline-offset-4">属性帮助</a>
        <button type="button" disabled className="h-[29px] w-[110px] rounded border border-[#e4e4e4] bg-[#f9f9f9] leading-6 text-[#8a8a8a]">应用</button>
      </div>
    </section>
  );
}

/* ---------- status bar ---------- */

function StatusSelect({ label, value }: { label: string; value: string }) {
  return (
    <div className="relative w-[306px]">
      <select aria-label={label} className="block h-[26px] w-full appearance-none border border-[#f0f0f0] bg-[#fdfdfd] px-1 leading-6 text-[#777]">
        <option>{value}</option>
      </select>
      <ChevronDown className="pointer-events-none absolute right-1 top-1 h-4 w-4 text-[#aaa]" strokeWidth={1.5} />
    </div>
  );
}

function StatusBar() {
  return (
    <footer className="flex h-[37px] shrink-0 items-center border-b border-dashed border-[#b5b5b5] bg-[#cbcbcb] pb-0.5 text-black">
      <p className="-ml-1 w-[1265px] shrink-0 whitespace-nowrap pt-1 leading-6">
        单击可进行选择; 按 Tab 键并单击可选择其他项目; 按 Ctrl 键并单击可将新项目添加到选择集; 按 Shift 键并单击可取消选择。
      </p>
      <span className="h-8 w-px bg-[#dadada]" />
      <svg viewBox="0 0 24 24" className="mx-[7px] h-6 w-6 shrink-0" aria-hidden>
        <path d="M7 9V2h11v7" fill="#f5f2cf" stroke="#1b3a12" strokeWidth="2" />
        <path d="M12 3v18M16 6v6" stroke="#444" strokeWidth="2" />
        <path d="M1 11l4-2 5 2v10l-5 2-4-2z" fill="#fff" stroke="#1677c8" strokeWidth="2.500" />
        <path d="M16 8l3 3 4-4v4l-2 3v9h-4v-9l-2-3z" fill="#fff" stroke="#4a5c68" />
      </svg>
      <StatusSelect label="工作集" value="" />
      <svg viewBox="0 0 24 24" className="ml-2 h-6 w-6 shrink-0" aria-hidden>
        <path d="M6 2h15v7h-4l-5 5-2-3 3-3H6z" fill="#d8d8d8" stroke="#f3f3f3" />
        <path d="M6 2h15v6h-4l-5 5" fill="none" stroke="#8f8f8f" strokeWidth="2" />
        <path d="M1 23l1-5 4-5 5 1 1 9z" fill="#999" />
      </svg>
      <span className="ml-2 w-9 pt-1 leading-6">:0</span>
      <Icon className="h-6 w-6 shrink-0"><path d="M1 2h22v20H1z" fill="#fff" stroke="#333" strokeWidth="2" /><path d="M1 3h22" strokeWidth="3" stroke="#333" /><path d="M4 8h3v3H4z" /><path d="M10 9h10M9 14h2M13 14h8M9 18h2M13 18h8" stroke="#333" strokeWidth="2" /></Icon>
      <svg viewBox="0 0 24 24" className="mx-[11px] h-6 w-6 shrink-0" aria-hidden>
        <path d="M1 1h22v21H1z" fill="#9a9a9a" />
        <path d="M1 14h8v-3l6 6-6 6v-4H1M11 5l5 5 3 8" fill="#b0b0b0" stroke="#f0f0f0" />
      </svg>
      <StatusSelect label="设计选项" value="主模型" />
    </footer>
  );
}

export default function App() {
  return (
    <div className={`${FONT} flex h-screen flex-col overflow-hidden bg-[#eee] text-[18px] leading-6 text-[#3c3c3c]`}>
      <Ribbon />
      <QuickToolbar />
      <div className="h-[39px] shrink-0" />
      <main className="flex min-h-0 flex-1 border-t-[3px] border-[#c9c9c9]">
        <AiPanel />
        <ModelView />
        <PropertiesPanel />
      </main>
      <StatusBar />
    </div>
  );
}
